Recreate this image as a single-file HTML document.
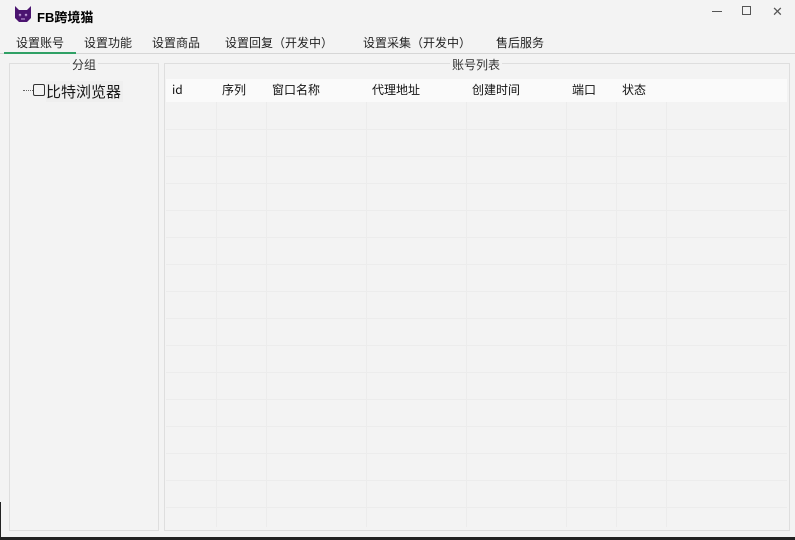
<!DOCTYPE html>
<html><head><meta charset="utf-8"><style>
*{margin:0;padding:0;box-sizing:border-box}
body{width:795px;height:540px;background:#f3f3f3;position:relative;overflow:hidden;font-family:"Liberation Sans","Noto Sans CJK SC",sans-serif;font-size:12px;color:#1a1a1a}
.a{position:absolute;white-space:nowrap}
.tab{position:absolute;top:34px;font-size:12px;color:#222}
.hdr{position:absolute;top:80px;font-size:12px;line-height:20px;color:#111;font-family:"Noto Sans CJK SC",sans-serif}
</style></head><body>
<svg class="a" style="left:14px;top:6px" width="18" height="17" viewBox="0 0 18 17">
<path d="M1 0 L5 4 L13 4 L17 0 L17 12 L13 16 L5 16 L1 12 Z" fill="#4b1470"/>
<path d="M5 8 L7 10 M7 8 L5 10 M11 8 L13 10 M13 8 L11 10 M7 13 L11 13" stroke="#c9a9e0" stroke-width="1"/>
</svg>
<div class="a" style="left:37px;top:7px;font-size:13px;font-weight:bold;color:#000">FB跨境猫</div>
<div class="a" style="left:712px;top:11px;width:10px;height:1px;background:#555"></div>
<div class="a" style="left:742px;top:6px;width:9px;height:9px;border:1px solid #555"></div>
<div class="a" style="left:772px;top:4px;font-size:13px;color:#555">✕</div>
<div class="tab" style="left:16px">设置账号</div>
<div class="tab" style="left:84px">设置功能</div>
<div class="tab" style="left:152px">设置商品</div>
<div class="tab" style="left:225px">设置回复（开发中）</div>
<div class="tab" style="left:363px">设置采集（开发中）</div>
<div class="tab" style="left:496px">售后服务</div>
<div class="a" style="left:0;top:53px;width:795px;height:1px;background:#d6d6d6"></div>
<div class="a" style="left:4px;top:52px;width:72px;height:2px;background:#2fa065"></div>
<div class="a" style="left:9px;top:63px;width:150px;height:468px;border:1px solid #dedede"></div>
<div class="a" style="left:70px;top:56px;background:#f3f3f3;padding:0 2px;color:#333">分组</div>
<div class="a" style="left:23px;top:90px;width:10px;border-top:1px dotted #666"></div>
<div class="a" style="left:33px;top:84px;width:12px;height:12px;border:1px solid #333;border-radius:2px"></div>
<div class="a" style="left:46px;top:81px;font-size:15px;background:#efefef;padding-right:2px">比特浏览器</div>
<div class="a" style="left:164px;top:63px;width:626px;height:468px;border:1px solid #dedede"></div>
<div class="a" style="left:450px;top:56px;background:#f3f3f3;padding:0 2px;color:#333">账号列表</div>
<div class="a" style="left:166px;top:79px;width:621px;height:23px;background:#fafafa"></div>
<svg class="a" style="left:166px;top:102px" width="621" height="425">
<g stroke="#ececec" stroke-width="1">
<line x1="50.5" y1="0" x2="50.5" y2="425"/><line x1="100.5" y1="0" x2="100.5" y2="425"/>
<line x1="200.5" y1="0" x2="200.5" y2="425"/><line x1="300.5" y1="0" x2="300.5" y2="425"/>
<line x1="400.5" y1="0" x2="400.5" y2="425"/><line x1="450.5" y1="0" x2="450.5" y2="425"/>
<line x1="500.5" y1="0" x2="500.5" y2="425"/>
<line x1="0" y1="27.5" x2="621" y2="27.5"/><line x1="0" y1="54.5" x2="621" y2="54.5"/>
<line x1="0" y1="81.5" x2="621" y2="81.5"/><line x1="0" y1="108.5" x2="621" y2="108.5"/>
<line x1="0" y1="135.5" x2="621" y2="135.5"/><line x1="0" y1="162.5" x2="621" y2="162.5"/>
<line x1="0" y1="189.5" x2="621" y2="189.5"/><line x1="0" y1="216.5" x2="621" y2="216.5"/>
<line x1="0" y1="243.5" x2="621" y2="243.5"/><line x1="0" y1="270.5" x2="621" y2="270.5"/>
<line x1="0" y1="297.5" x2="621" y2="297.5"/><line x1="0" y1="324.5" x2="621" y2="324.5"/>
<line x1="0" y1="351.5" x2="621" y2="351.5"/><line x1="0" y1="378.5" x2="621" y2="378.5"/>
<line x1="0" y1="405.5" x2="621" y2="405.5"/>
</g></svg>
<div class="hdr" style="left:172px">id</div>
<div class="hdr" style="left:222px">序列</div>
<div class="hdr" style="left:272px">窗口名称</div>
<div class="hdr" style="left:372px">代理地址</div>
<div class="hdr" style="left:472px">创建时间</div>
<div class="hdr" style="left:572px">端口</div>
<div class="hdr" style="left:622px">状态</div>
<div class="a" style="left:0;top:502px;width:1px;height:38px;background:#222"></div>
<div class="a" style="left:0;top:537px;width:795px;height:3px;background:#222"></div>
</body></html>
